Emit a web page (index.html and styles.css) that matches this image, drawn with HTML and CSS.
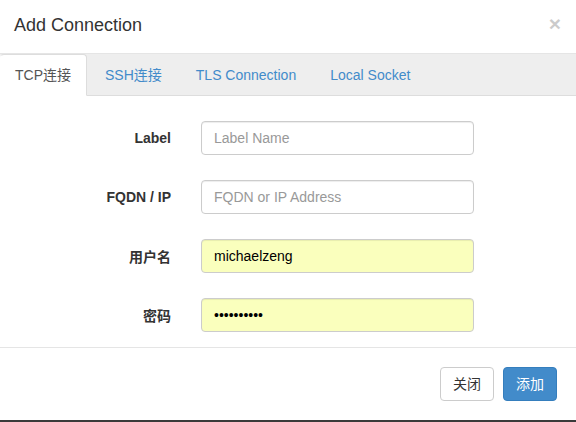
FILE: index.html
```html
<!DOCTYPE html>
<html lang="zh-CN">
<head>
    <meta charset="UTF-8">
    <title>Add Connection</title>
    <link rel="stylesheet" href="styles.css">
</head>
<body>
    <div class="modal">
        <div class="modal-header">
            <h4 class="modal-title">Add Connection</h4>
            <button class="close" type="button">&times;</button>
        </div>

        <ul class="nav-tabs">
            <li class="active"><a href="#">TCP连接</a></li>
            <li><a href="#">SSH连接</a></li>
            <li><a href="#">TLS Connection</a></li>
            <li><a href="#">Local Socket</a></li>
        </ul>

        <form class="tab-content">
            <div class="form-group">
                <label for="label">Label</label>
                <input type="text" id="label" class="form-control" placeholder="Label Name">
            </div>
            <div class="form-group">
                <label for="host">FQDN / IP</label>
                <input type="text" id="host" class="form-control" placeholder="FQDN or IP Address">
            </div>
            <div class="form-group">
                <label for="user">用户名</label>
                <input type="text" id="user" class="form-control autofill" value="michaelzeng">
            </div>
            <div class="form-group">
                <label for="pass">密码</label>
                <input type="password" id="pass" class="form-control autofill" value="michael123">
            </div>
        </form>

        <div class="modal-footer">
            <button class="btn btn-default" type="button">关闭</button>
            <button class="btn btn-primary" type="button">添加</button>
        </div>
    </div>
</body>
</html>
```

FILE: styles.css
```css
html, body {
    margin: 0;
    padding: 0;
    background: #fff;
}
body {
    font-family: "Liberation Sans", Arial, "Noto Sans CJK SC", sans-serif;
    font-size: 14px;
    color: #333;
}
.modal {
    border-bottom: 2px solid #3a3a3a;
}
.modal-header {
    display: flex;
    justify-content: space-between;
    align-items: flex-start;
    padding: 15px 15px 0 14px;
    height: 38px;
    border-bottom: 1px solid #e5e5e5;
}
.modal-title {
    margin: 0;
    font-size: 18px;
    font-weight: normal;
    line-height: 20px;
}
.close {
    background: none;
    border: 0;
    padding: 0;
    margin-top: -2px;
    font-size: 21px;
    font-weight: bold;
    line-height: 1;
    color: #000;
    opacity: .2;
    font-family: "Liberation Sans", Arial, sans-serif;
    cursor: pointer;
}

/* tabs */
.nav-tabs {
    list-style: none;
    margin: 0;
    padding: 0;
    display: flex;
    background-color: #eee;
    border-bottom: 1px solid #ddd;
    height: 41px;
}
.nav-tabs li {
    margin-right: 2px;
    margin-bottom: -1px;
}
.nav-tabs a {
    display: block;
    padding: 10px 15px;
    line-height: 20px;
    border: 1px solid transparent;
    border-radius: 4px 4px 0 0;
    color: #428bca;
    text-decoration: none;
}
.nav-tabs li.active a {
    background: #fff;
    color: #555;
    border-color: #ddd;
    border-left-color: transparent;
    border-bottom-color: transparent;
    padding-left: 14px;
}

/* form */
.tab-content {
    padding: 25px 0 15px;
    display: flex;
    flex-direction: column;
    gap: 25px;
}
.form-group {
    display: grid;
    grid-template-columns: 171px 273px;
    column-gap: 30px;
    align-items: center;
}
.form-group label {
    text-align: right;
    font-weight: bold;
}
.form-control {
    box-sizing: border-box;
    height: 34px;
    padding: 6px 12px;
    font-family: inherit;
    font-size: 14px;
    color: #555;
    background: #fff;
    border: 1px solid #ccc;
    border-radius: 4px;
    box-shadow: inset 0 1px 1px rgba(0,0,0,.075);
}
.form-control::placeholder {
    color: #999;
}
.form-control.autofill {
    background-color: #faffbd;
    color: #000;
}

/* footer */
.modal-footer {
    border-top: 1px solid #e5e5e5;
    padding: 19px 19px 19px;
    display: flex;
    justify-content: flex-end;
    gap: 9px;
}
.btn {
    height: 34px;
    padding: 6px 12px;
    font-family: inherit;
    font-size: 14px;
    line-height: 20px;
    border: 1px solid transparent;
    border-radius: 4px;
    cursor: pointer;
}
.btn-default {
    background: #fff;
    color: #333;
    border-color: #ccc;
}
.btn-primary {
    background: #428bca;
    color: #fff;
    border-color: #357ebd;
}
```
